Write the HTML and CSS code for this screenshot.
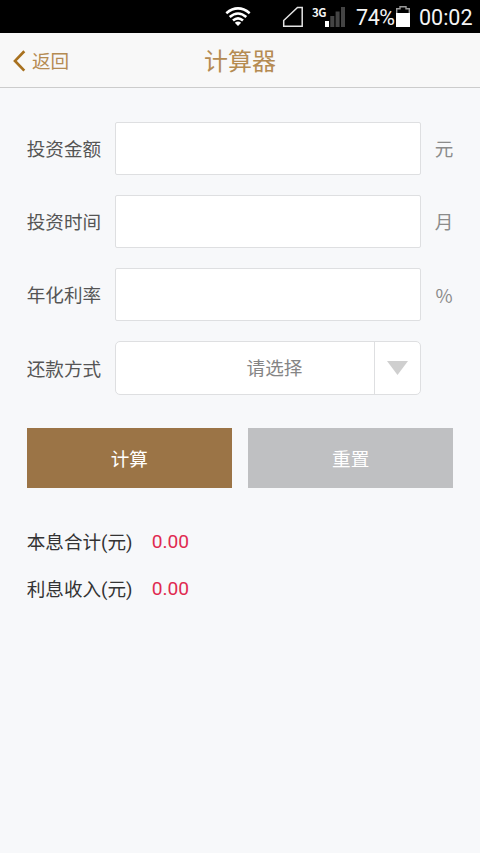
FILE: index.html
```html
<!DOCTYPE html>
<html lang="zh-CN">
<head>
<meta charset="utf-8">
<meta name="viewport" content="width=device-width, initial-scale=1">
<title>计算器</title>
<link rel="stylesheet" href="styles.css">
</head>
<body>
<div class="status">
  <svg class="wifi" width="26" height="20" viewBox="0 0 26 20">
    <path d="M1.3 6.2Q13 -3.3 24.7 6.2" />
    <path d="M4.7 10Q13 3 21.3 10" />
    <path d="M8 13.6Q13 9.2 18 13.6" />
    <path class="wifi-dot" d="M9.8 15.8Q13 13.2 16.2 15.8L13 19Z" />
  </svg>
  <svg class="empty-signal" width="22" height="22" viewBox="0 0 22 22">
    <path d="M1.7 20.2V14.5L15.5 1.5H20.2V20.2Z" />
  </svg>
  <span class="network">3G</span>
  <svg class="signal" width="20" height="20" viewBox="0 0 20 20">
    <path class="on" d="M0 14h4v6H0z" />
    <path d="M5.3 9h4v11h-4zM10.6 4.5h4V20h-4zM16 0h4v20h-4z" />
  </svg>
  <span class="percent">74%</span>
  <svg class="battery" width="14" height="21" viewBox="0 0 14 21">
    <path class="shell" d="M.7 7V2.7H4V.7H10V2.7H13.3V7" />
    <path class="charge" d="M0 7h14v14H0z" />
  </svg>
  <span class="clock">00:02</span>
</div>

<header class="header">
  <a class="back">
    <svg width="13" height="22" viewBox="0 0 13 22"><path d="M11.3 1.2L2 10.9L11.3 20.6" /></svg>
    <span class="back-text">返回</span>
  </a>
  <h1 class="title">计算器</h1>
</header>

<main class="main">
  <form class="form">
    <div class="row"><label class="label" for="amount">投资金额</label><input class="field" id="amount"><span class="unit">元</span></div>
    <div class="row"><label class="label" for="time">投资时间</label><input class="field" id="time"><span class="unit">月</span></div>
    <div class="row"><label class="label" for="rate">年化利率</label><input class="field" id="rate"><span class="unit percent-unit">%</span></div>
    <div class="row">
      <span class="label">还款方式</span>
      <div class="field select">
        <span class="select-value">请选择</span>
        <span class="select-arrow"><svg width="21" height="14" viewBox="0 0 21 14"><path d="M0 0h21L10.5 14z" /></svg></span>
      </div>
    </div>
    <div class="actions">
      <button class="button primary" type="button">计算</button>
      <button class="button" type="reset">重置</button>
    </div>
  </form>
  <div class="result"><span class="result-name">本息合计(元)</span><span class="result-value">0.00</span></div>
  <div class="result"><span class="result-name">利息收入(元)</span><span class="result-value">0.00</span></div>
</main>
</body>
</html>
```

FILE: styles.css
```css
* { box-sizing: border-box; }

body {
  margin: 0;
  min-height: 853px;
  background: #f7f8fa;
  font-family: Roboto, "Noto Sans CJK SC", sans-serif;
  font-size: 18.6px;
  color: #333;
}

svg { display: block; flex: none; }

.status {
  display: flex;
  align-items: center;
  height: 33px;
  padding-left: 225px;
  background: #000;
  color: #f4f4f4;
  font-size: 21.5px;
  line-height: 31px;
  white-space: nowrap;
}

.wifi { fill: none; stroke: #fff; stroke-width: 2.6; }
.wifi .wifi-dot { fill: #fff; stroke: none; }
.empty-signal { margin-left: 31px; fill: none; stroke: #e4e4e4; stroke-width: 1.5; }

.network {
  align-self: flex-start;
  width: 14px;
  margin: 5px 0 0 8px;
  font: bold 11.5px/14px "Noto Sans CJK SC", sans-serif;
  letter-spacing: -.5px;
}

.signal { margin-left: -1px; fill: #444; }
.signal .on { fill: #fff; }
.percent { width: 40px; margin-left: 11px; padding-top: 2px; letter-spacing: -.4px; }
.battery { stroke: none; }
.battery .shell { fill: none; stroke: #999; stroke-width: 1.4; }
.battery .charge { fill: #fff; }
.clock { margin-left: 9px; padding-top: 2px; }

.header {
  display: grid;
  grid-template-columns: 1fr auto 1fr;
  align-items: center;
  height: 55px;
  border-bottom: 1px solid #ccc;
  background: #f8f8f8;
  color: #b58b52;
}

.back { display: flex; align-items: center; gap: 6.5px; padding-left: 12.5px; }
.back svg { margin-top: 1px; fill: none; stroke: #a8711f; stroke-width: 2.7; }
.back-text { padding-bottom: 2px; }
.title { margin: 0; padding-top: 3px; font-size: 24px; font-weight: 400; line-height: 36px; }

.main { padding: 33.5px 26.7px 0; }
.row { display: flex; align-items: center; height: 53.3px; margin-bottom: 20px; }
.label { flex: none; width: 88px; padding-bottom: 1.5px; color: #555; }

.field {
  flex: none;
  width: 306.5px;
  height: 53.3px;
  border: 1px solid #dedfe1;
  border-radius: 2px;
  background: #fff;
  outline: 0;
}

.unit { width: 18.6px; margin-left: 13.5px; padding-bottom: 1px; color: #8b8b8b; text-align: center; }
.percent-unit { padding-bottom: 0; font-family: "Noto Sans CJK SC", sans-serif; }

.select { display: flex; border-radius: 5px; color: #858585; }
.select-value { flex: 1; padding-left: 59px; line-height: 54px; text-align: center; }
.select-arrow {
  display: flex;
  align-items: center;
  justify-content: center;
  width: 46px;
  border-left: 1px solid #dedfe1;
}
.select-arrow svg { fill: #cfcfcf; }

.actions { display: flex; gap: 16px; margin: 33.3px 0 30.5px; }
.button {
  flex: 1;
  height: 60px;
  padding: 0;
  border: 0;
  background: #bfc0c2;
  color: #fff;
  font: inherit;
}
.primary { background: #9b7446; }

.result { display: flex; align-items: center; height: 46.7px; }
.result-name { width: 125px; padding-bottom: 2px; }
.result-value { color: #e02a50; font-size: 19.2px; }
```
